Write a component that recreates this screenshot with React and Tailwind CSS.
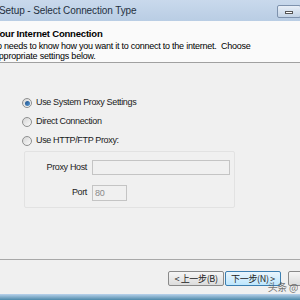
import React from 'react';

const sans = '"Liberation Sans", Arial, sans-serif';
const cjk = '"Noto Sans CJK SC", sans-serif';

function Radio({ checked, label }) {
  return (
    <label className="flex items-center gap-[4px] h-[18px]">
      <span className="w-[10px] h-[10px] rounded-full border border-[#8e8f8f] bg-gradient-to-br from-[#d6d6d6] to-[#fafafa] flex items-center justify-center">
        {checked && <span className="w-[5px] h-[5px] rounded-full bg-gradient-to-br from-[#1b4f8a] to-[#5b9bd6]" />}
      </span>
      <span>{label}</span>
    </label>
  );
}

export default function App() {
  return (
    <div
      className="w-[300px] h-[300px] overflow-hidden flex flex-col bg-[#f0f0f0] text-[9px] tracking-[-0.35px] text-black"
      style={{ fontFamily: sans }}
    >
      {/* Title bar */}
      <div className="h-[21px] shrink-0 flex items-center bg-gradient-to-b from-[#c9d9ec] to-[#b9cde4]">
        <span className="-ml-[1px] text-[10px] tracking-[-0.1px] text-[#24303e] flex-1">
          Setup - Select Connection Type
        </span>
        <div className="w-[24px] h-[13px] mt-[2px] -mr-[1px] rounded-[2px] border border-[#7e92ad] bg-gradient-to-b from-[#e8eff7] to-[#c3d3e6] flex items-center justify-center">
          <span className="w-[8px] h-[3px] border border-[#555] bg-white mt-[2px]" />
        </div>
      </div>

      {/* Header */}
      <div className="h-[42px] shrink-0 bg-[#fafafa] border-b border-[#a0a0a0] pt-[7px] leading-[10px] whitespace-nowrap overflow-hidden">
        <div className="font-bold -ml-[6px] mb-[2px] text-[9.5px] leading-[11px] tracking-[-0.2px]">Your Internet Connection</div>
        <div className="-ml-[3px] tracking-[-0.25px]">o needs to know how you want it to connect to the internet.&nbsp; Choose</div>
        <div className="-ml-[6px] tracking-[-0.2px]">appropriate settings below.</div>
      </div>

      {/* Body */}
      <div className="flex-1 flex flex-col pl-[22px] pt-[31px]">
        <div className="flex flex-col gap-[1px] text-[#1a1a1a]">
          <Radio checked label="Use System Proxy Settings" />
          <Radio label="Direct Connection" />
          <Radio label="Use HTTP/FTP Proxy:" />
        </div>
        <div className="mt-[1px] ml-[2px] w-[211px] h-[57px] border border-[#e2e2e2] rounded-[2px] flex flex-col gap-[10px] pt-[8px] text-[#222]">
          <div className="flex items-center">
            <span className="w-[67px] text-right pr-[5px]">Proxy Host</span>
            <div className="w-[138px] h-[15px] border border-[#c4c4c4] bg-[#f0f0f0]" />
          </div>
          <div className="flex items-center">
            <span className="w-[67px] text-right pr-[5px]">Port</span>
            <div className="w-[35px] h-[16px] border border-[#c4c4c4] bg-[#f0f0f0] text-[#8a8a8a] pl-[2px] leading-[14px]">80</div>
          </div>
        </div>
      </div>

      {/* Footer */}
      <div className="h-[35px] shrink-0 border-t border-[#a8a8a8] flex items-start justify-end pt-[11px] gap-[1px] -mr-[14px] relative">
        <button className="w-[56px] h-[15px] border border-[#8a8a8a] rounded-[2px] bg-gradient-to-b from-[#f6f6f6] to-[#dcdcdc] text-[9px] leading-[13px] text-[#222]" style={{ fontFamily: cjk }}>
          &lt; 上一步(B)
        </button>
        <button className="w-[56px] h-[15px] border border-[#3c7fb1] rounded-[2px] bg-gradient-to-b from-[#eaf6fd] to-[#bee6fd] text-[9px] leading-[13px] text-[#222]" style={{ fontFamily: cjk }}>
          下一步(N) &gt;
        </button>
        <button className="ml-[6px] w-[26px] h-[15px] border border-[#8a8a8a] rounded-[2px] bg-gradient-to-b from-[#f6f6f6] to-[#dcdcdc]" />
        <span className="absolute right-[16px] top-[19px] text-[10px] text-[#555] opacity-80" style={{ fontFamily: cjk }}>头条 @</span>
      </div>

      <div className="h-[6px] shrink-0 bg-gradient-to-b from-[#b9d3ec] to-[#4e8aaa]" />
    </div>
  );
}
